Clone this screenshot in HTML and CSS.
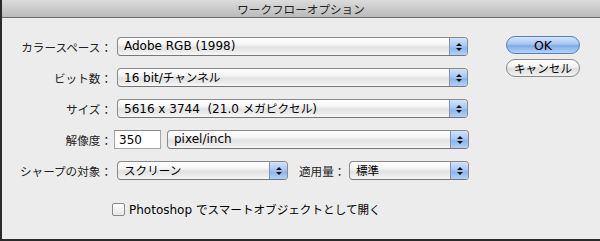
FILE: index.html
```html
<!DOCTYPE html>
<html lang="ja">
<head>
    <meta charset="UTF-8">
    <title>ワークフローオプション</title>
    <link rel="stylesheet" href="styles.css">
</head>
<body>
<div class="window">
    <div class="titlebar ja">ワークフローオプション</div>
    <div class="content">
        <div class="form">
            <div class="row">
                <label class="ja">カラースペース：</label>
                <div class="popup wide"><span class="value">Adobe RGB (1998)</span><span class="stepper"><i class="up"></i><i class="down"></i></span></div>
            </div>
            <div class="row">
                <label class="ja">ビット数：</label>
                <div class="popup wide"><span class="value">16 bit/<span class="ja">チャンネル</span></span><span class="stepper"><i class="up"></i><i class="down"></i></span></div>
            </div>
            <div class="row">
                <label class="ja">サイズ：</label>
                <div class="popup wide"><span class="value">5616 x 3744&nbsp;&nbsp;(21.0 <span class="ja">メガピクセル</span>)</span><span class="stepper"><i class="up"></i><i class="down"></i></span></div>
            </div>
            <div class="row">
                <label class="ja">解像度：</label>
                <div class="controls">
                    <div class="field">350</div>
                    <div class="popup unit"><span class="value">pixel/inch</span><span class="stepper"><i class="up"></i><i class="down"></i></span></div>
                </div>
            </div>
            <div class="row">
                <label class="ja">シャープの対象：</label>
                <div class="controls">
                    <div class="popup target"><span class="value ja">スクリーン</span><span class="stepper"><i class="up"></i><i class="down"></i></span></div>
                    <span class="sublabel ja">適用量：</span>
                    <div class="popup amount"><span class="value ja">標準</span><span class="stepper"><i class="up"></i><i class="down"></i></span></div>
                </div>
            </div>
            <div class="check-row">
                <span class="checkbox"></span>
                <span>Photoshop <span class="ja">でスマートオブジェクトとして開く</span></span>
            </div>
        </div>
        <div class="buttons">
            <button class="btn default">OK</button>
            <button class="btn"><span class="ja">キャンセル</span></button>
        </div>
    </div>
</div>
</body>
</html>
```

FILE: styles.css
```css
body {
    margin: 0;
    background: #2a2a2a;
    font-family: "DejaVu Sans", "Noto Sans CJK JP", sans-serif;
    font-size: 12px;
    color: #111;
}
.ja {
    font-family: "Noto Sans CJK JP", sans-serif;
    font-size: 11.6px;
}
.window {
    margin-left: 2px;
    height: 239px;
    background: #ececec;
    display: flex;
    flex-direction: column;
}
.titlebar {
    height: 17px;
    line-height: 18px;
    text-align: center;
    color: #222;
    background: linear-gradient(#dcdcdc, #bababa);
    border-bottom: 1px solid #6e6e6e;
}
.content {
    display: flex;
}
.form {
    padding-top: 19px;
    display: flex;
    flex-direction: column;
    gap: 12px;
}
.row {
    display: grid;
    grid-template-columns: 110px auto;
    column-gap: 5px;
    align-items: center;
    height: 19px;
}
.row label {
    text-align: right;
    color: #222;
}
.controls {
    display: flex;
    align-items: center;
}
.popup {
    height: 17px;
    display: flex;
    border: 1px solid #8a8a8a;
    border-bottom-color: #777;
    border-radius: 4px;
    background: linear-gradient(#ffffff 0%, #f6f6f6 35%, #e2e2e2 55%, #eeeeee 85%, #f8f8f8 100%);
}
.popup .value {
    flex: 1;
    padding-left: 6px;
    line-height: 17px;
    color: #000;
    white-space: nowrap;
}
.stepper {
    width: 17px;
    border-left: 1px solid #7d93b3;
    border-radius: 0 3px 3px 0;
    background: linear-gradient(#d2e3f9 0%, #a9c8f1 45%, #8db6ec 60%, #b4d1f6 100%);
    display: flex;
    flex-direction: column;
    align-items: center;
    justify-content: center;
    gap: 2px;
}
.stepper i {
    width: 0;
    height: 0;
    border-left: 3px solid transparent;
    border-right: 3px solid transparent;
}
.stepper .up {
    border-bottom: 3px solid #111;
}
.stepper .down {
    border-top: 3px solid #111;
}
.wide {
    width: 349px;
}
.field {
    width: 41px;
    height: 17px;
    line-height: 18px;
    margin-left: -3px;
    padding-left: 4px;
    background: #fff;
    border: 1px solid #a5a5a5;
    border-top-color: #8a8a8a;
    color: #000;
}
.unit {
    margin-left: 6px;
    width: 300px;
}
.target {
    width: 169px;
}
.sublabel {
    margin-left: 11px;
    width: 50px;
    color: #222;
}
.amount {
    width: 118px;
}
.check-row {
    margin-top: 9px;
    margin-left: 110px;
    display: flex;
    align-items: center;
    gap: 4px;
    color: #000;
}
.checkbox {
    width: 11px;
    height: 11px;
    border: 1px solid #8a8a8a;
    border-radius: 2px;
    background: linear-gradient(#ffffff, #e6e6e6);
}
.buttons {
    margin-left: 37px;
    padding-top: 18px;
    display: flex;
    flex-direction: column;
    gap: 5px;
}
.btn {
    width: 74px;
    height: 18px;
    padding: 0;
    font-family: inherit;
    font-size: 12.5px;
    color: #000;
    border: 1px solid #8a8a8a;
    border-radius: 9px;
    background: linear-gradient(#ffffff 0%, #f4f4f4 40%, #dedede 55%, #f2f2f2 100%);
}
.default {
    border-color: #5b7fb5;
    background: linear-gradient(#d5e5fb 0%, #a5c6f1 45%, #7eaaea 55%, #b8d4f6 100%);
}
```
